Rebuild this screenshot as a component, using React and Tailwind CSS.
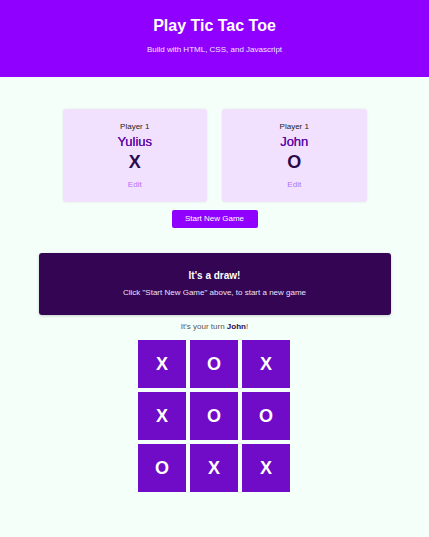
export default function App() {
  const players = [
    { label: "Player 1", name: "Yulius", symbol: "X" },
    { label: "Player 1", name: "John", symbol: "O" },
  ];
  const board = ["X", "O", "X", "X", "O", "O", "O", "X", "X"];

  return (
    <div className="min-h-screen bg-[#f5fff9] font-['Liberation_Sans',Arial,sans-serif] text-[#333]">
      <header className="h-[77px] bg-[#9000ff] text-white text-center pt-[16px]">
        <h1 className="text-[16px] leading-[20px] font-bold">Play Tic Tac Toe</h1>
        <p className="mt-[9px] text-[8px] leading-[10px] text-[#f0e4ff]">Build with HTML, CSS, and Javascript</p>
      </header>

      <main className="pt-[32px] flex flex-col items-center">
        <div className="grid grid-cols-2 gap-[15px] w-[304px]">
          {players.map((p) => (
            <div
              key={p.name}
              className="h-[93px] rounded-[3px] bg-[#f2e1fe] shadow-[0_0_3px_rgba(0,0,0,0.08)] flex flex-col items-center pt-[13px]"
            >
              <div className="text-[8px] leading-[10px] text-[#222]">{p.label}</div>
              <div className="mt-[2px] text-[13px] leading-[16px] text-[#5e0aa8] [text-shadow:0_0_0.4px_#5e0aa8]">{p.name}</div>
              <div className="mt-[1px] text-[18px] leading-[22px] font-bold text-[#2a0a4a]">{p.symbol}</div>
              <button className="mt-[7px] text-[8px] leading-[10px] text-[#b071ff]">Edit</button>
            </div>
          ))}
        </div>

        <button className="mt-[8px] w-[86px] h-[18px] rounded-[2px] bg-[#9000ff] text-white text-[8px] font-medium">
          Start New Game
        </button>

        <div className="mt-[25px] w-[352px] h-[62px] rounded-[3px] bg-[#330552] text-white text-center shadow-[0_1px_3px_rgba(0,0,0,0.2)] flex flex-col items-center pt-[17px]">
          <div className="text-[10px] leading-[12px] font-bold">It's a draw!</div>
          <div className="mt-[6px] text-[8px] leading-[10px] text-[#ece0ff]">Click "Start New Game" above, to start a new game</div>
        </div>

        <p className="mt-[7px] text-[8px] leading-[10px] text-[#555]">
          It's your turn <span className="font-bold text-[#2a0a4a]">John</span>!
        </p>

        <div className="mt-[8px] mr-[1px] grid grid-cols-3 gap-[4px]">
          {board.map((c, i) => (
            <div
              key={i}
              className="w-[48px] h-[48px] bg-[#700bc8] flex items-center justify-center text-white text-[18px] font-bold"
            >
              {c}
            </div>
          ))}
        </div>
      </main>
    </div>
  );
}
